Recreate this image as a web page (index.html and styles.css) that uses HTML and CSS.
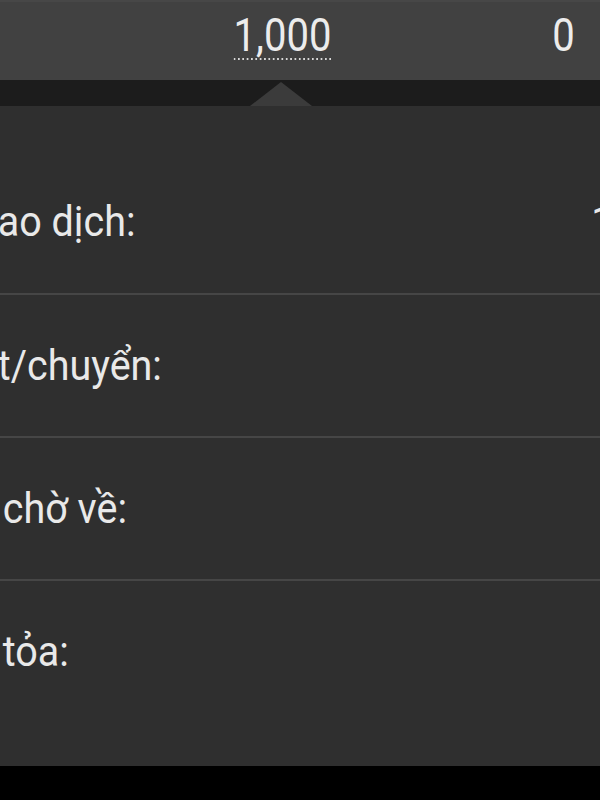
FILE: index.html
```html
<!DOCTYPE html>
<html lang="vi">
<head>
<meta charset="utf-8">
<link rel="stylesheet" href="styles.css">
</head>
<body>
<div class="screen">
  <div class="topbar">
    <div class="cell cell-a"><span class="num dotted">1,000</span></div>
    <div class="cell cell-b"><span class="num">0</span></div>
  </div>
  <div class="strip"><div class="pointer"></div></div>
  <div class="panel">
    <div class="row"><span class="label cut">ao dịch:</span><span class="value">1,000</span></div>
    <div class="row sep"><span class="label cut">t/chuyển:</span><span class="value">0</span></div>
    <div class="row sep"><span class="label">chờ về:</span><span class="value">0</span></div>
    <div class="row sep"><span class="label">tỏa:</span><span class="value">0</span></div>
  </div>
</div>
</body>
</html>
```
FILE: styles.css
```css
html, body {
  margin: 0;
  padding: 0;
  background: #000;
}
body {
  width: 600px;
  height: 800px;
  overflow: hidden;
  font-family: Roboto, "Noto Sans", sans-serif;
  color: #e9e9e9;
}
.screen {
  width: 700px;
}
.topbar {
  height: 80px;
  box-sizing: border-box;
  background: #414141;
  border-top: 2px solid #474747;
  display: flex;
}
.cell {
  box-sizing: border-box;
  display: flex;
  justify-content: flex-end;
  align-items: flex-start;
  padding-top: 8px;
}
.cell-a {
  width: 355px;
  padding-right: 24px;
}
.cell-b {
  width: 245px;
  padding-right: 25px;
}
.num {
  display: inline-block;
  font-size: 46px;
  line-height: 50px;
  transform: scaleX(0.87);
  transform-origin: right center;
  color: #ececec;
}
.dotted {
  padding-bottom: 0;
  background-image: linear-gradient(to right, #d8d8d8 50%, transparent 50%);
  background-size: 5px 2px;
  background-repeat: repeat-x;
  background-position: left bottom;
}
.strip {
  height: 26px;
  background: #1c1c1c;
  display: flex;
  align-items: flex-end;
}
.pointer {
  margin-left: 250px;
  width: 0;
  height: 0;
  border-left: 31px solid transparent;
  border-right: 31px solid transparent;
  border-bottom: 24px solid #3b3b3b;
}
.panel {
  background: #2f2f2f;
  padding: 44px 0;
  height: 660px;
  box-sizing: border-box;
}
.row {
  height: 143px;
  box-sizing: border-box;
  display: flex;
  align-items: center;
  justify-content: space-between;
  padding-right: 12px;
}
.row.sep {
  border-top: 2px solid #464646;
}
.label, .value {
  display: inline-block;
  font-size: 42px;
  line-height: 42px;
  white-space: pre;
  transform: scaleX(0.94);
}
.label {
  transform-origin: left center;
  padding-left: 3px;
}
.label.cut {
  margin-left: -5px;
}
.value {
  transform-origin: right center;
}
```
